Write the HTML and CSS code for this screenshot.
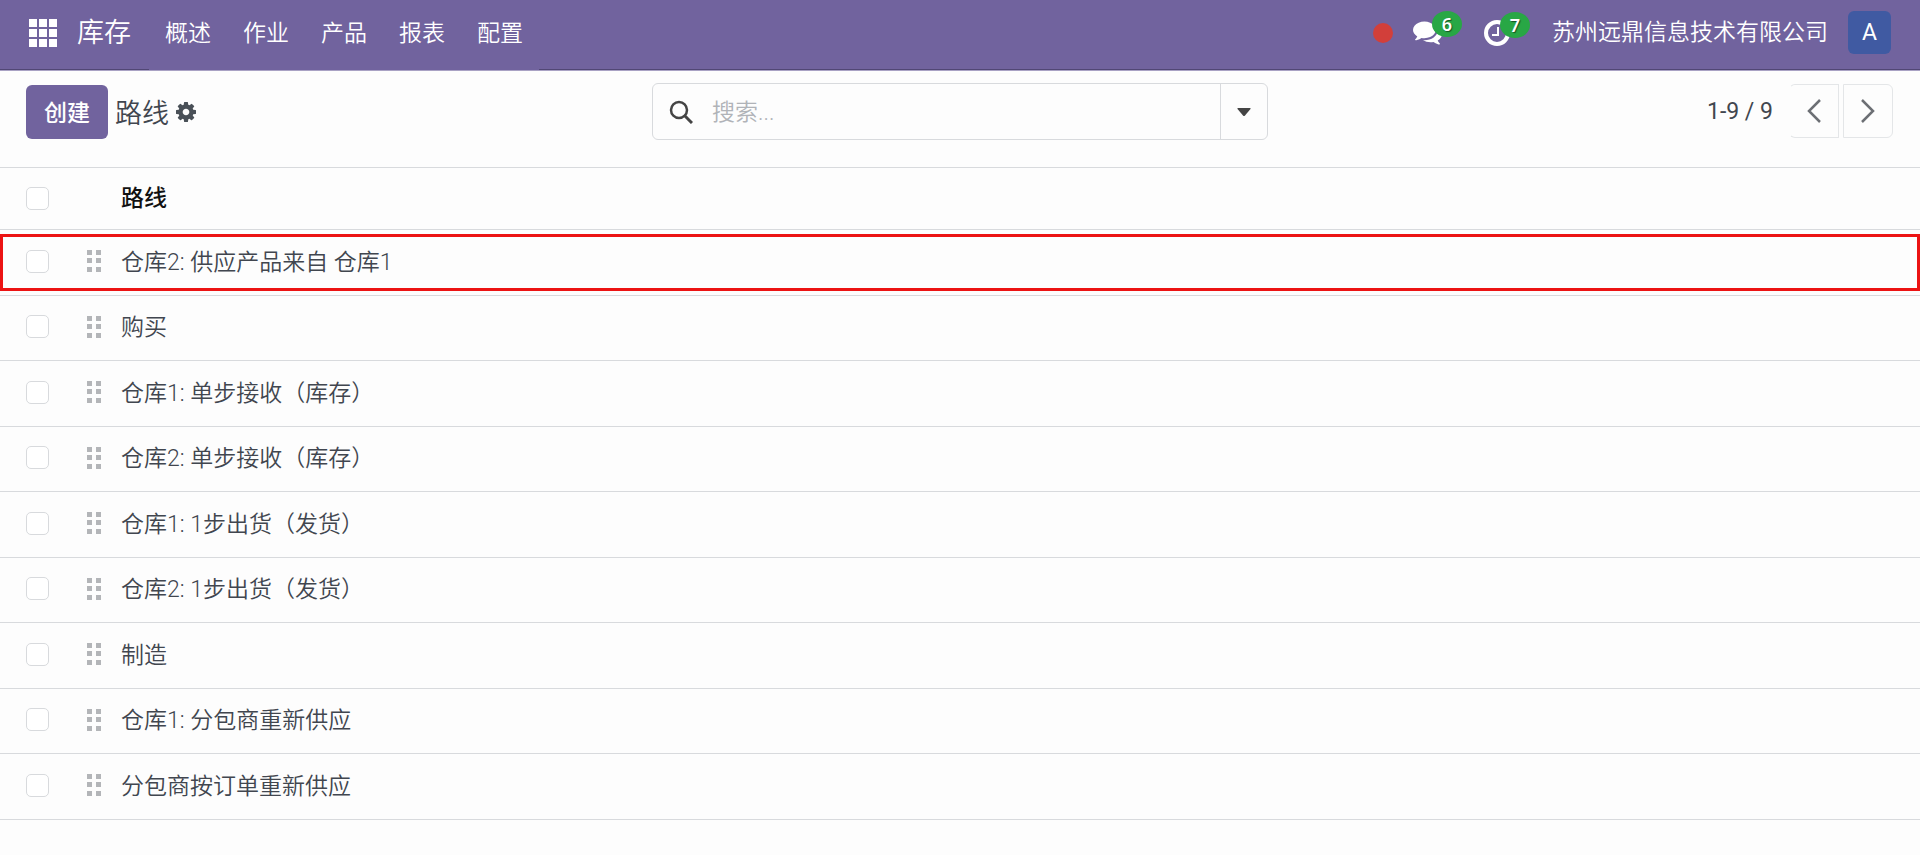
FILE: index.html
```html
<!DOCTYPE html>
<html lang="zh-CN">
<head>
    <meta charset="UTF-8">
    <title>路线</title>
    <link rel="stylesheet" href="styles.css">
</head>
<body>
    <header class="navbar">
        <button class="apps" aria-label="应用">
            <svg width="28" height="28" viewBox="0 0 28 28" fill="currentColor"><path d="M0 0h8v8H0zM10 0h8v8h-8zM20 0h8v8h-8zM0 10h8v8H0zM10 10h8v8h-8zM20 10h8v8h-8zM0 20h8v8H0zM10 20h8v8h-8zM20 20h8v8h-8z"/></svg>
        </button>
        <a class="brand" href="#">库存</a>
        <nav class="menu">
            <a href="#">概述</a>
            <a href="#">作业</a>
            <a href="#">产品</a>
            <a href="#">报表</a>
            <a href="#">配置</a>
        </nav>
        <div class="systray">
            <span class="record-dot"></span>
            <button class="tray-button" aria-label="消息">
                <svg width="29" height="24" viewBox="0 256 1792 1408" fill="currentColor"><path d="M1408 768q0 139-94 257t-256.500 186.500-353.500 68.500q-86 0-176-16-124 88-278 128-36 9-86 16h-3q-11 0-20.500-8t-11.500-21q-1-3-1-6.500t.5-6.500 2-6l2.500-5 3.500-5.500 4-5 4.500-5 4-4.500q5-6 23-25t26-29.500 22.500-29 25-38.500 20.500-44q-124-72-195-177t-71-224q0-139 94-257t256.500-186.500 353.500-68.500 353.500 68.500 256.500 186.500 94 257zm384 256q0 120-71 224.500t-195 176.500q10 24 20.500 44t25 38.500 22.500 29 26 29.500 23 25q1 1 4 4.500t4.500 5 4 5 3.500 5.500l2.500 5 2 6 .5 6.500-1 6.500q-3 14-13 22t-22 7q-50-7-86-16-154-40-278-128-90 16-176 16-271 0-472-132 58 4 88 4 161 0 309-45t264-129q125-92 192-212t67-254q0-77-23-152 129 71 204 178t75 230z"/></svg>
                <span class="badge">6</span>
            </button>
            <button class="tray-button" aria-label="活动">
                <svg width="26" height="26" viewBox="0 0 26 26" fill="none" stroke="currentColor"><circle cx="13" cy="13" r="11" stroke-width="4"/><path d="M14 7v8H8" stroke-width="2"/></svg>
                <span class="badge">7</span>
            </button>
            <a class="company" href="#">苏州远鼎信息技术有限公司</a>
            <button class="avatar">A</button>
        </div>
    </header>

    <div class="control-panel">
        <div class="breadcrumb">
            <button class="create">创建</button>
            <h1>路线</h1>
            <button class="gear" aria-label="动作">
                <svg width="20" height="20" viewBox="128 128 1536 1536" fill="currentColor"><path d="M1152 896q0-106-75-181t-181-75-181 75-75 181 75 181 181 75 181-75 75-181zm512-109v222q0 12-8 23t-20 13l-185 28q-19 54-39 91 35 50 107 138 10 12 10 25t-9 23q-27 37-99 108t-94 71q-12 0-26-9l-138-108q-44 23-91 38-16 136-29 186-7 28-36 28h-222q-14 0-24.500-8.500t-11.500-21.500l-28-184q-49-16-90-37l-141 107q-10 9-25 9-14 0-25-11-126-114-165-168-7-10-7-23 0-12 8-23 15-21 51-66.500t54-70.500q-27-50-41-99l-183-27q-13-2-21-12.500t-8-23.500v-222q0-12 8-23t19-13l186-28q14-46 39-92-40-57-107-138-10-12-10-24 0-10 9-23 26-36 98.500-107.500t94.500-71.500q13 0 26 10l138 107q44-23 91-38 16-136 29-186 7-28 36-28h222q14 0 24.500 8.500t11.500 21.500l28 184q49 16 90 37l142-107q9-9 24-9 13 0 25 10 129 119 165 170 7 8 7 22 0 12-8 23-15 21-51 66.500t-54 70.500q26 50 41 98l183 28q13 2 21 12.500t8 23.500z"/></svg>
            </button>
        </div>
        <div class="search">
            <svg width="24" height="24" viewBox="0 0 24 24" fill="none" stroke="currentColor"><circle cx="10" cy="10" r="8" stroke-width="2.500"/><path d="M15.500 15.500L23 23" stroke-width="3"/></svg>
            <input type="text" placeholder="搜索..." aria-label="搜索">
            <button class="search-toggle" aria-label="筛选">
                <svg width="14" height="8" viewBox="0 0 14 8" fill="currentColor"><path d="M1 0h12q1 0 .5 1L8 7.500q-1 1-2 0L.5 1Q0 0 1 0z"/></svg>
            </button>
        </div>
        <div class="pager">
            <span>1-9 / 9</span>
            <div class="pager-buttons">
                <button class="previous" aria-label="上一页">
                    <svg width="14" height="24" viewBox="0 0 14 24" fill="none" stroke="currentColor" stroke-width="2.500"><path d="M13 1L2 12l11 11"/></svg>
                </button>
                <button class="next" aria-label="下一页">
                    <svg width="14" height="24" viewBox="0 0 14 24" fill="none" stroke="currentColor" stroke-width="2.500"><path d="M1 1l11 11L1 23"/></svg>
                </button>
            </div>
        </div>
    </div>

    <svg width="0" height="0" class="symbols">
        <symbol id="grip" viewBox="0 0 14 22"><path d="M0 0h5v5H0zM9 0h5v5H9zM0 8h5v5H0zM9 8h5v5H9zM0 17h5v5H0zM9 17h5v5H9z"/></symbol>
    </svg>

    <table class="list">
        <thead>
            <tr>
                <th class="select"><input type="checkbox" aria-label="全选"></th>
                <th class="handle"></th>
                <th>路线</th>
            </tr>
        </thead>
        <tbody>
            <tr class="marked">
                <td class="select"><input type="checkbox" id="r1"></td>
                <td class="handle"><svg><use href="#grip"/></svg></td>
                <td><label for="r1">仓库2: 供应产品来自 仓库1</label></td>
            </tr>
            <tr>
                <td class="select"><input type="checkbox" id="r2"></td>
                <td class="handle"><svg><use href="#grip"/></svg></td>
                <td><label for="r2">购买</label></td>
            </tr>
            <tr>
                <td class="select"><input type="checkbox" id="r3"></td>
                <td class="handle"><svg><use href="#grip"/></svg></td>
                <td><label for="r3">仓库1: 单步接收（库存）</label></td>
            </tr>
            <tr>
                <td class="select"><input type="checkbox" id="r4"></td>
                <td class="handle"><svg><use href="#grip"/></svg></td>
                <td><label for="r4">仓库2: 单步接收（库存）</label></td>
            </tr>
            <tr>
                <td class="select"><input type="checkbox" id="r5"></td>
                <td class="handle"><svg><use href="#grip"/></svg></td>
                <td><label for="r5">仓库1: 1步出货（发货）</label></td>
            </tr>
            <tr>
                <td class="select"><input type="checkbox" id="r6"></td>
                <td class="handle"><svg><use href="#grip"/></svg></td>
                <td><label for="r6">仓库2: 1步出货（发货）</label></td>
            </tr>
            <tr>
                <td class="select"><input type="checkbox" id="r7"></td>
                <td class="handle"><svg><use href="#grip"/></svg></td>
                <td><label for="r7">制造</label></td>
            </tr>
            <tr>
                <td class="select"><input type="checkbox" id="r8"></td>
                <td class="handle"><svg><use href="#grip"/></svg></td>
                <td><label for="r8">仓库1: 分包商重新供应</label></td>
            </tr>
            <tr>
                <td class="select"><input type="checkbox" id="r9"></td>
                <td class="handle"><svg><use href="#grip"/></svg></td>
                <td><label for="r9">分包商按订单重新供应</label></td>
            </tr>
        </tbody>
    </table>
</body>
</html>
```
FILE: styles.css
```css
* {
    box-sizing: border-box;
}

body {
    margin: 0;
    background-color: #fdfdfd;
    color: #41464f;
    font-family: Roboto, "Noto Sans CJK SC", sans-serif;
    font-size: 23px;
    font-weight: 350;
    line-height: 34px;
}

a {
    color: inherit;
    text-decoration: none;
}

button {
    display: flex;
    align-items: center;
    justify-content: center;
    padding: 0;
    border: none;
    background: none;
    color: inherit;
    font: inherit;
}

svg {
    display: block;
}

.symbols {
    position: absolute;
}

/* navbar */
.navbar {
    display: flex;
    align-items: center;
    height: 71px;
    padding: 0 29px 5px;
    border-bottom: 1px solid #a9a2c4;
    background-color: #71639e;
    box-shadow: inset 0 -1px #514775;
    color: white;
}

.brand {
    margin: 0 18px 0 20px;
    font-size: 27px;
}

.menu {
    display: flex;
    align-self: flex-start;
    background-color: #71639e;
}

.menu a {
    height: 70px;
    padding: 0 16px;
    line-height: 67px;
}

.systray {
    display: flex;
    align-items: center;
    margin-left: auto;
}

.record-dot {
    width: 20px;
    height: 20px;
    margin-right: 20px;
    border-radius: 50%;
    background-color: #d23f3a;
}

.tray-button {
    position: relative;
    margin-right: 42px;
}

.badge {
    position: absolute;
    bottom: 8px;
    right: -20px;
    width: 30px;
    height: 26px;
    border-radius: 50%;
    background-color: #28a745;
    font-family: "Noto Sans", sans-serif;
    font-size: 18px;
    font-weight: 600;
    line-height: 26px;
    text-shadow: 1px 1px 1px rgba(0, 0, 0, 0.5);
}

.avatar {
    width: 43px;
    height: 43px;
    margin-left: 20px;
    border-radius: 6px;
    background-color: #405aa2;
    font-weight: 400;
}

/* control panel */
.control-panel {
    display: grid;
    grid-template-columns: 1fr 616px 1fr;
    align-items: start;
    padding: 12px 26px 26px;
}

.breadcrumb {
    display: flex;
    align-items: center;
    height: 58px;
}

.create {
    width: 82px;
    height: 54px;
    padding-top: 3px;
    border-radius: 6px;
    background-color: #71639e;
    color: white;
    font-weight: 500;
}

.breadcrumb h1 {
    margin: 0 7px;
    padding-top: 3px;
    font-size: 27px;
    font-weight: 350;
}

.gear {
    color: #495057;
}

.search {
    display: flex;
    align-items: center;
    height: 57px;
    padding-left: 16px;
    border: 1px solid #d8dadd;
    border-radius: 6px;
    color: #444;
}

.search input {
    flex: 1;
    align-self: stretch;
    min-width: 0;
    padding: 2px 19px 0;
    border: none;
    outline: none;
    background: none;
    font: inherit;
}

.search input::placeholder {
    color: #b0b3b8;
}

.search-toggle {
    align-self: stretch;
    width: 47px;
    border-left: 1px solid #d8dadd;
}

.pager {
    display: flex;
    align-items: center;
    justify-content: flex-end;
    gap: 16px;
    height: 56px;
    padding-right: 1px;
}

.pager span {
    padding-top: 2px;
    font-weight: 400;
}

.pager-buttons {
    display: flex;
    gap: 4px;
}

.pager-buttons button {
    width: 50px;
    height: 54px;
    border: 1px solid #e4e6e8;
    color: #6c6f74;
}

.pager-buttons .previous {
    border-left-color: transparent;
    border-radius: 6px 0 0 6px;
}

.pager-buttons .next {
    border-radius: 0 6px 6px 0;
}

/* list */
.list {
    width: 100%;
    border-collapse: separate;
    border-spacing: 0;
    border-top: 1px solid #d8dadd;
}

.list th,
.list td {
    height: 66px;
    padding: 0;
    border-bottom: 1px solid #d8dadd;
    text-align: left;
}

.list th {
    height: 62px;
    color: #111;
    font-weight: 500;
}

.list tr:nth-child(even) td {
    height: 65px;
}

.list .select {
    width: 87px;
    padding-left: 26px;
}

.list .handle {
    width: 34px;
}

.list td.select,
.list td.handle {
    padding-bottom: 3px;
}

.list input {
    display: block;
    width: 23px;
    height: 23px;
    margin: 0;
    appearance: none;
    border: 1px solid #d8dadd;
    border-radius: 5px;
    background-color: white;
}

.handle svg {
    width: 14px;
    height: 22px;
    fill: #b3b5b8;
}

/* red frame around the row being explained */
.marked {
    position: relative;
}

.marked td:first-child::after {
    content: "";
    position: absolute;
    inset: 4px 0 5px;
    border: 3px solid #ec1313;
    pointer-events: none;
}
```
